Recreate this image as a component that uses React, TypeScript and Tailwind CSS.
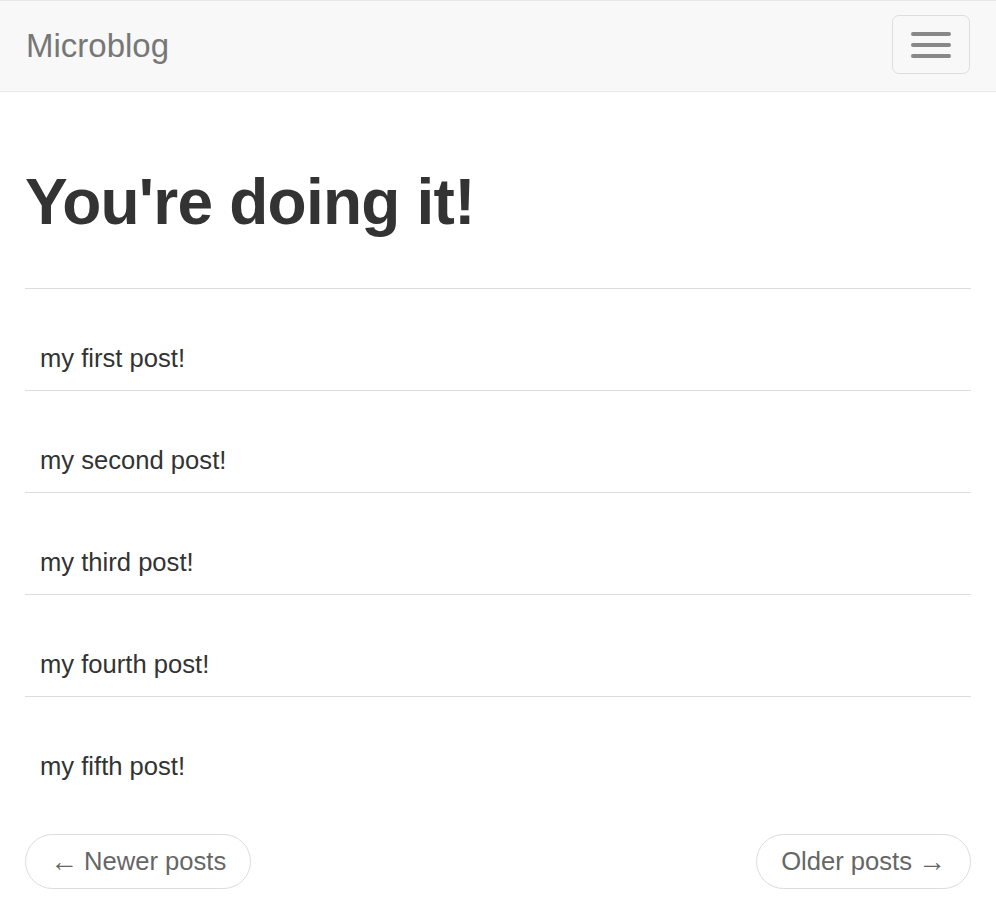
const posts = ["my first post!", "my second post!", "my third post!", "my fourth post!", "my fifth post!"];

function Navbar() {
  return (
    <header className="flex h-[92px] items-start justify-between border-y border-[#e7e7e7] bg-[#f8f8f8] pl-[26px] pr-[26px]">
      <a className="mt-[27px] text-[33px] leading-[36px] text-[#777]">Microblog</a>
      <button className="mt-[14px] flex h-[59px] w-[78px] flex-col items-center justify-center gap-[7px] rounded-[7px] border border-[#ddd]">
        <span className="block h-[4px] w-[40px] rounded-full bg-[#888]" />
        <span className="block h-[4px] w-[40px] rounded-full bg-[#888]" />
        <span className="block h-[4px] w-[40px] rounded-full bg-[#888]" />
      </button>
    </header>
  );
}

export default function App() {
  return (
    <div className="min-h-[906px] bg-white font-['Liberation_Sans',Arial,sans-serif] text-[#333]">
      <Navbar />
      <main className="px-[25px]">
        <div className="border-b border-[#ddd] pt-[75px] pb-[51px]">
          <h1 className="text-[64px] font-bold leading-[70px] tracking-[-0.012em]">You're doing it!</h1>
        </div>
        <ul>
          {posts.map((p, i) => (
            <li
              key={p}
              className={
                "px-[15px] pt-[51px] pb-[14px] text-[25.6px] leading-[36px] " +
                (i < posts.length - 1 ? "border-b border-[#ddd]" : "")
              }
            >
              {p}
            </li>
          ))}
        </ul>
        <nav className="mt-[36px] flex justify-between">
          <a className="flex h-[55px] items-center rounded-full border border-[#ddd] px-[24px] text-[25.6px] text-[#666]">
            <span className="mr-[6px] text-[28px]">←</span>Newer posts
          </a>
          <a className="flex h-[55px] items-center rounded-full border border-[#ddd] px-[24px] text-[25.6px] text-[#666]">
            Older posts<span className="ml-[6px] text-[28px]">→</span>
          </a>
        </nav>
      </main>
    </div>
  );
}
